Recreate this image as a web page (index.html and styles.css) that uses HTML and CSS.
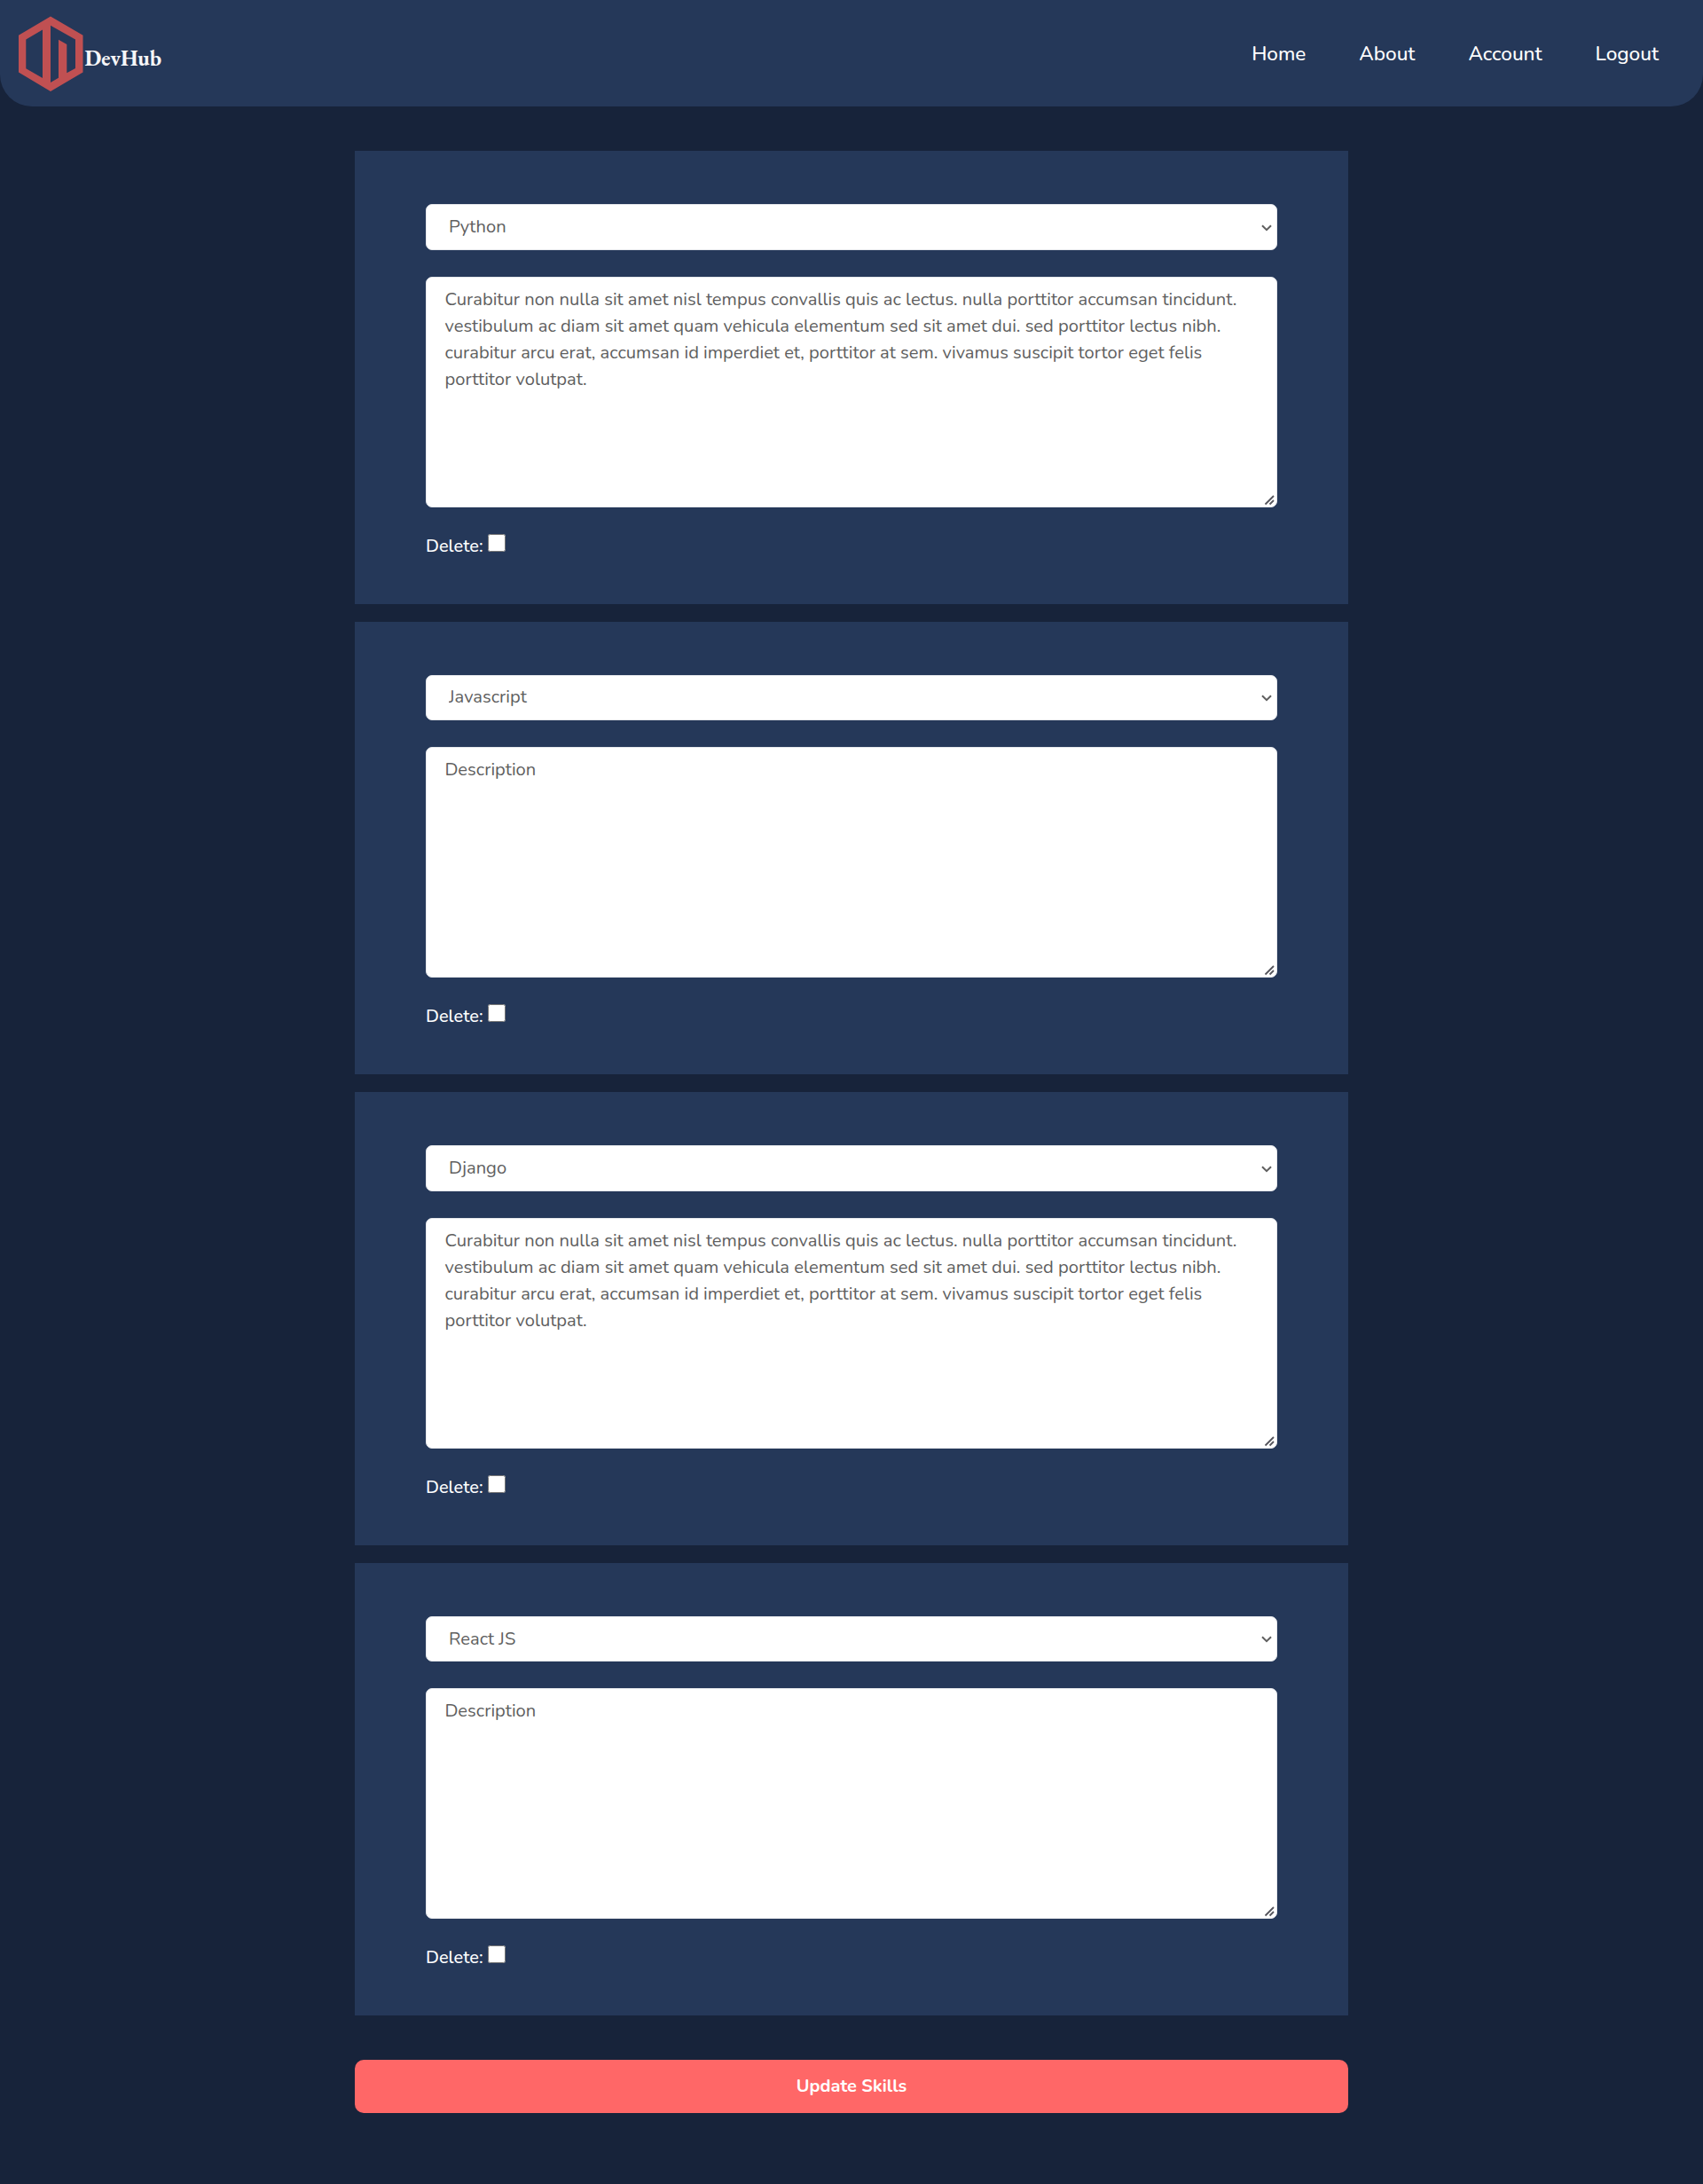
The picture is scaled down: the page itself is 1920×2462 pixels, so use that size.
FILE: index.html
```
<!DOCTYPE html>
<html lang="en">
<head>
<meta charset="utf-8">
<title>DevHub</title>
<link rel="stylesheet" href="styles.css">
</head>
<body>
<header class="header">
  <a class="logo">
    <svg class="logo__mark" width="74" height="86" viewBox="20 18 74 86"><path fill="#c05052" fill-rule="evenodd" d="M57 18.4 93.5 39.7V81.6L57 103 21 81.6V39.7ZM48 33.5 29.3 44.5V77.3L48 88ZM57 28.7V93L66 87.7V44.7L75.3 50V82.3L85 77V44.5Z"/></svg>
    <span class="logo__text">DevHub</span>
  </a>
  <nav class="nav">
    <a>Home</a>
    <a>About</a>
    <a>Account</a>
    <a>Logout</a>
  </nav>
</header>
<main>
  <form class="form">
    <section class="card">
      <select class="input input--select"><option>Python</option></select>
      <textarea class="input input--area">Curabitur non nulla sit amet nisl tempus convallis quis ac lectus. nulla porttitor accumsan tincidunt. vestibulum ac diam sit amet quam vehicula elementum sed sit amet dui. sed porttitor lectus nibh. curabitur arcu erat, accumsan id imperdiet et, porttitor at sem. vivamus suscipit tortor eget felis porttitor volutpat.</textarea>
      <label class="delete">Delete: <input type="checkbox"></label>
    </section>
    <section class="card">
      <select class="input input--select"><option>Javascript</option></select>
      <textarea class="input input--area" placeholder="Description"></textarea>
      <label class="delete">Delete: <input type="checkbox"></label>
    </section>
    <section class="card">
      <select class="input input--select"><option>Django</option></select>
      <textarea class="input input--area">Curabitur non nulla sit amet nisl tempus convallis quis ac lectus. nulla porttitor accumsan tincidunt. vestibulum ac diam sit amet quam vehicula elementum sed sit amet dui. sed porttitor lectus nibh. curabitur arcu erat, accumsan id imperdiet et, porttitor at sem. vivamus suscipit tortor eget felis porttitor volutpat.</textarea>
      <label class="delete">Delete: <input type="checkbox"></label>
    </section>
    <section class="card">
      <select class="input input--select"><option>React JS</option></select>
      <textarea class="input input--area" placeholder="Description"></textarea>
      <label class="delete">Delete: <input type="checkbox"></label>
    </section>
    <button class="submit" type="button">Update Skills</button>
  </form>
</main>
</body>
</html>
```
FILE: styles.css
```
* {
  box-sizing: border-box;
}

body {
  margin: 0;
  min-height: 2462px;
  background: #17233a;
  color: #fff;
  font: 500 20px/30px Nunito, Lato, "Open Sans", sans-serif;
}

.header {
  display: flex;
  align-items: center;
  justify-content: space-between;
  height: 120px;
  padding: 2px 50px 0 20px;
  background: #253859;
  border-radius: 0 0 36px 36px;
}

.logo {
  display: flex;
  align-items: center;
}

.logo__mark {
  display: block;
}

.logo__text {
  margin: 8px 0 0 1.6px;
  color: #f6f6f8;
  font: 700 24.5px/30px "EB Garamond", "Liberation Serif", serif;
}

.nav {
  display: flex;
  gap: 60px;
  font-size: 22.5px;
}

.form {
  display: flex;
  flex-direction: column;
  gap: 20px;
  width: 1120px;
  margin: 50px auto 0;
}

.card {
  display: flex;
  flex-direction: column;
  gap: 30px;
  height: 510.6px;
  padding: 60px 80px;
  background: #253859;
}

.input {
  display: block;
  flex: none;
  width: 100%;
  margin: 0;
  border: 1px solid #e5e7eb;
  border-radius: 7px;
  background: #fff;
  color: #5f5f5f;
  font: 400 20.2px/30px Nunito, Lato, "Open Sans", sans-serif;
  outline: none;
}

.input--select {
  height: 51.6px;
  padding: 0 0 0 25px;
  appearance: none;
  background: #fff url("data:image/svg+xml,%3Csvg xmlns='http://www.w3.org/2000/svg' width='12' height='8'%3E%3Cpath d='M1 1.2l5 5 5-5' fill='none' stroke='%235f5f5f' stroke-width='2'/%3E%3C/svg%3E") no-repeat right 5px top 21.5px;
}

.input--area {
  height: 260px;
  padding: 10px 20px 10px 20.4px;
  resize: vertical;
}

.input--area::-webkit-resizer {
  background: url("data:image/svg+xml,%3Csvg xmlns='http://www.w3.org/2000/svg' width='15' height='15'%3E%3Cpath d='M2.5 12.5l9.5-9.5M7.5 12.5l4.5-4.5' fill='none' stroke='%2355555c' stroke-width='1.8'/%3E%3C/svg%3E") no-repeat right bottom;
}

.input::placeholder {
  color: #5f5f5f;
}

.delete {
  display: flex;
  gap: 5px;
  height: 20px;
  line-height: 27px;
}

.delete input {
  width: 20px;
  height: 20px;
  margin: 0;
}

.submit {
  height: 60px;
  margin: 30px 0 0;
  border: 0;
  border-radius: 10px;
  background: #ff6767;
  color: #fff;
  font: 700 20px/30px Nunito, Lato, "Open Sans", sans-serif;
}
```
